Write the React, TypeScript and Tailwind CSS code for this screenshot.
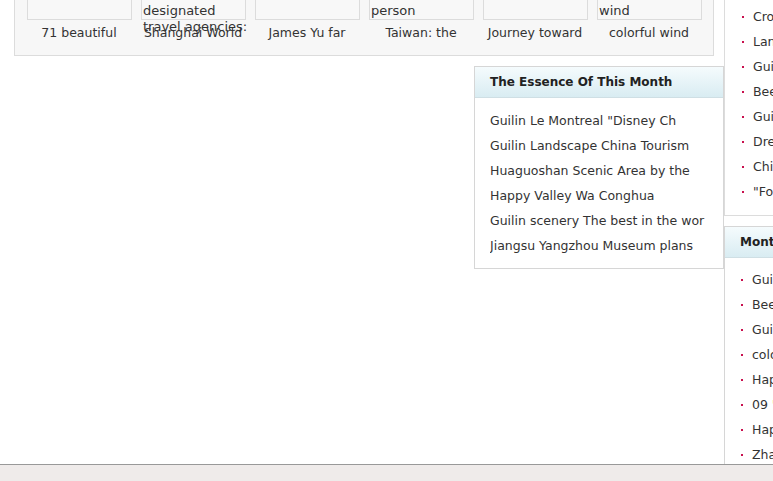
import React from 'react';

const thumbs = [
  { alt: [], caption: '71 beautiful' },
  { alt: ['designated', 'travel agencies:'], caption: 'Shanghai World' },
  { alt: [], caption: 'James Yu far' },
  { alt: ['person'], caption: 'Taiwan: the' },
  { alt: [], caption: 'Journey toward' },
  { alt: ['wind'], caption: 'colorful wind' },
];

const essence = [
  'Guilin Le Montreal "Disney Ch',
  'Guilin Landscape China Tourism',
  'Huaguoshan Scenic Area by the',
  'Happy Valley Wa Conghua',
  'Guilin scenery The best in the wor',
  'Jiangsu Yangzhou Museum plans',
];

const hotList = [
  'Crown Plaza Guilin',
  'Landscape of Lijiang',
  'Guilin Reed Flute Cave',
  'Beer fish of Yangshuo',
  'Guilin Elephant Trunk Hill',
  'Dream of Lijiang',
  'China Tourism Day',
  '"Forbidden City" tour',
];

const monthList = [
  'Guilin Le Montreal',
  'Beer fish of Yangshuo',
  'Guilin Landscape',
  'colorful wind',
  'Happy Valley',
  '09',
  'Happy Valley Wa',
  'Zhangjiajie',
];

const Bullet = () => <span className="inline-block w-[2px] h-[2px] bg-[#c8104e] mr-[9px] shrink-0" />;

export default function App() {
  return (
    <div
      className="w-[773px] h-[481px] overflow-hidden bg-white flex flex-col text-[12.5px] text-[#333]"
      style={{ fontFamily: '"DejaVu Sans", Verdana, sans-serif' }}
    >
      <div className="h-[464px] overflow-hidden flex">
        {/* ── LEFT / MIDDLE ── */}
        <div className="w-[724px] shrink-0 flex flex-col">
          <div className="ml-[14px] w-[700px] border border-t-0 border-[#dcdcdc] bg-[#f7f7f7] pl-[7px] pb-[14px]">
            <div className="flex -mt-[60px]">
              {thumbs.map((t, i) => (
                <div key={i} className="w-[114px] flex flex-col items-center">
                  <div className="w-[105px] h-[80px] border border-[#dcdcdc] bg-[#f8f8f8] self-start ml-[5px]">
                    {t.alt.length > 0 && (
                      <div className="pt-[62px] pl-[1px] leading-[16px] text-[13px] whitespace-nowrap">
                        {t.alt.map(a => (
                          <div key={a}>{a}</div>
                        ))}
                      </div>
                    )}
                  </div>
                  <div className="mt-[5px] leading-[16px] whitespace-nowrap">{t.caption}</div>
                </div>
              ))}
            </div>
          </div>

          <div className="self-end w-[250px] mt-[10px] border border-[#d6d6d6]">
            <div className="h-[31px] flex items-center pl-[15px] text-[12px] font-bold text-[#222] border-b border-[#cfdfe4] bg-gradient-to-b from-[#f5fbfd] to-[#d9ecf2]">
              The Essence Of This Month
            </div>
            <div className="pt-[10px] pb-[10px] px-[15px] leading-[25px]">
              {essence.map(e => (
                <div key={e} className="whitespace-nowrap overflow-hidden">{e}</div>
              ))}
            </div>
          </div>
        </div>

        {/* ── RIGHT COLUMN ── */}
        <div className="flex-1 flex flex-col min-w-[300px]">
          <div className="border-l border-b border-[#dcdcdc] pt-[4px] pb-[11px] pl-[17px] leading-[25px]">
            {hotList.map(h => (
              <div key={h} className="flex items-center whitespace-nowrap">
                <Bullet />
                {h}
              </div>
            ))}
          </div>

          <div className="mt-[10px] border border-[#d6d6d6]">
            <div className="h-[31px] flex items-center pl-[15px] text-[12px] font-bold text-[#222] border-b border-[#cfdfe4] bg-gradient-to-b from-[#f5fbfd] to-[#d9ecf2] whitespace-nowrap">
              Monthly Ranking
            </div>
            <div className="pt-[9px] pl-[16px] leading-[25px]">
              {monthList.map((m, i) => (
                <div key={i} className="flex items-center whitespace-nowrap">
                  <Bullet />
                  {m === '09' ? (
                    <span>
                      09 <span className="text-[#f08a00]">"Guilin</span>
                    </span>
                  ) : (
                    m
                  )}
                </div>
              ))}
            </div>
          </div>
        </div>
      </div>

      {/* ── BOTTOM BAR ── */}
      <div className="flex-1 border-t border-[#999] bg-[#efebea]" />
    </div>
  );
}
